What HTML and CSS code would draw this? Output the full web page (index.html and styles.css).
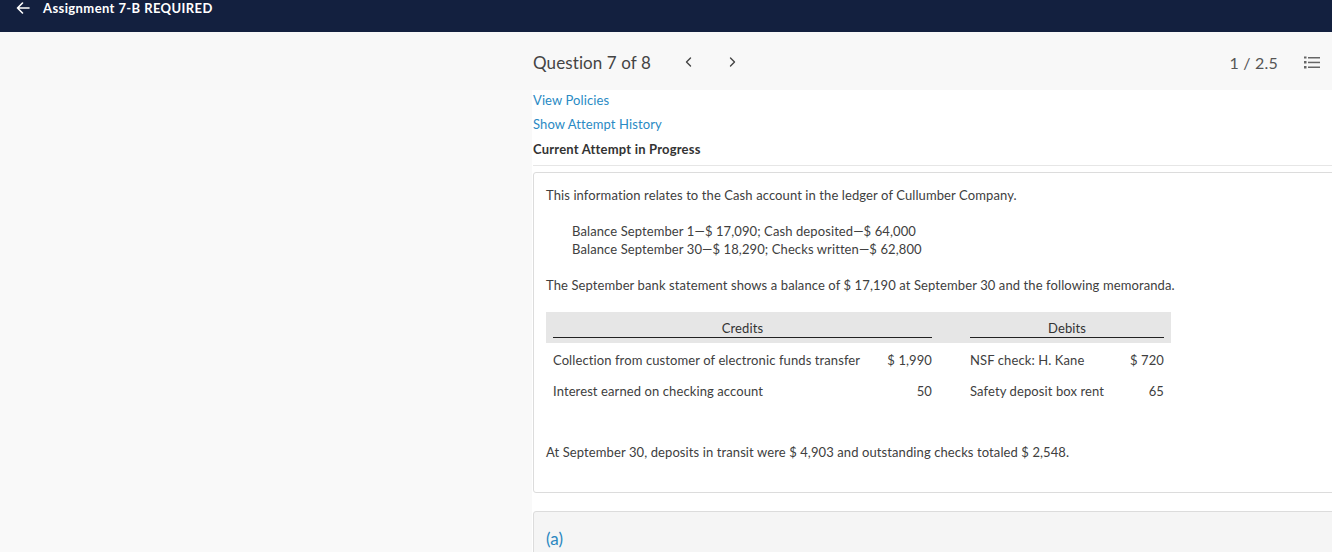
FILE: index.html
```html
<!DOCTYPE html>
<html lang="en">
<head>
<meta charset="utf-8">
<title>Assignment 7-B REQUIRED</title>
<link rel="stylesheet" href="styles.css">
</head>
<body>
<header class="topbar">
  <svg class="back" width="14" height="12" viewBox="0 0 14 12" aria-hidden="true">
    <path d="M13 6H1.5M6.5 1L1.5 6l5 5" fill="none" stroke="#fff" stroke-width="1.6" stroke-linecap="round" stroke-linejoin="round"/>
  </svg>
  <span class="title">Assignment 7-B REQUIRED</span>
</header>

<div class="qbar">
  <div class="qbar-spacer"></div>
  <div class="qbar-main">
    <div class="qnav">
      <span class="qtitle">Question 7 of 8</span>
      <svg class="chev" width="7" height="10" viewBox="0 0 7 10" aria-hidden="true"><path d="M5.5 1L1.5 5l4 4" fill="none" stroke="#444" stroke-width="1.4" stroke-linecap="round" stroke-linejoin="round"/></svg>
      <svg class="chev" width="7" height="10" viewBox="0 0 7 10" aria-hidden="true"><path d="M1.5 1l4 4-4 4" fill="none" stroke="#444" stroke-width="1.4" stroke-linecap="round" stroke-linejoin="round"/></svg>
    </div>
    <div class="score">
      <span class="points">1 / 2.5</span>
      <svg class="listicon" width="16" height="13" viewBox="0 0 16 13" aria-hidden="true">
        <rect x="0" y="0.5" width="2.5" height="2" fill="#666"/>
        <rect x="0" y="5" width="2.5" height="2.5" fill="#666"/>
        <rect x="0" y="10" width="2.5" height="2.5" fill="#666"/>
        <rect x="4" y="1" width="12" height="1.5" fill="#666"/>
        <rect x="4" y="5.7" width="12" height="1.5" fill="#666"/>
        <rect x="4" y="10.5" width="12" height="1.5" fill="#666"/>
      </svg>
    </div>
  </div>
</div>

<div class="page">
  <aside class="side"></aside>
  <main class="main">
    <div class="meta">
      <a class="link first" href="#">View Policies</a>
      <a class="link second" href="#">Show Attempt History</a>
      <div class="attempt">Current Attempt in Progress</div>
    </div>

    <section class="card">
      <p class="para">This information relates to the Cash account in the ledger of Cullumber Company.</p>
      <div class="indent">
        <div>Balance September 1—$ 17,090; Cash deposited—$ 64,000</div>
        <div>Balance September 30—$ 18,290; Checks written—$ 62,800</div>
      </div>
      <p class="para">The September bank statement shows a balance of $ 17,190 at September 30 and the following memoranda.</p>

      <div class="memo">
        <div class="memo-head">
          <div class="hcell credits"><span>Credits</span></div>
          <div class="hgap"></div>
          <div class="hcell debits"><span>Debits</span></div>
        </div>
        <div class="memo-row">
          <div class="lab">Collection from customer of electronic funds transfer</div>
          <div class="amt">$ 1,990</div>
          <div></div>
          <div class="lab">NSF check: H. Kane</div>
          <div class="amt">$ 720</div>
        </div>
        <div class="memo-row">
          <div class="lab">Interest earned on checking account</div>
          <div class="amt">50</div>
          <div></div>
          <div class="lab">Safety deposit box rent</div>
          <div class="amt">65</div>
        </div>
      </div>

      <p class="para last">At September 30, deposits in transit were $ 4,903 and outstanding checks totaled $ 2,548.</p>
    </section>

    <section class="card part">
      <div class="part-label">(a)</div>
    </section>
  </main>
</div>
</body>
</html>
```

FILE: styles.css
```css
html, body {
  margin: 0;
  padding: 0;
}
body {
  background: #f9f9f9;
  font-family: Lato, "Open Sans", "Liberation Sans", sans-serif;
  color: #333;
  overflow: hidden;
  width: 1332px;
  height: 552px;
}

.topbar {
  height: 32px;
  background: #13203f;
  display: flex;
  align-items: flex-start;
  padding-left: 16px;
  box-sizing: border-box;
}
.topbar .back {
  margin-top: 2px;
}
.topbar .title {
  color: #fff;
  font-weight: 700;
  font-size: 13px;
  line-height: 16px;
  margin-left: 13px;
  letter-spacing: 0.4px;
}

.qbar {
  height: 58px;
  display: flex;
  background: #f8f8f8;
}
.qbar-spacer {
  width: 532px;
  flex: none;
}
.qbar-main {
  flex: 1;
  display: flex;
  align-items: center;
  justify-content: space-between;
  padding-right: 12px;
  padding-top: 2px;
}
.qnav {
  display: flex;
  align-items: center;
}
.qtitle {
  font-size: 17px;
  color: #444;
  padding-left: 1px;
  letter-spacing: 0.1px;
}
.chev {
  margin-left: 37px;
}
.qtitle + .chev {
  margin-left: 34px;
}
.score {
  display: flex;
  align-items: center;
}
.points {
  font-size: 16px;
  color: #555;
  letter-spacing: 0.2px;
}
.listicon {
  margin-left: 26px;
}

.page {
  display: flex;
}
.side {
  width: 532px;
  flex: none;
}
.main {
  flex: none;
  width: 830px;
  background: #fff;
  padding-left: 1px;
  height: 470px;
}

.meta {
  border-bottom: 1px solid #e6e6e6;
  padding-bottom: 6px;
}
.link {
  display: block;
  color: #2a8ac4;
  text-decoration: none;
  font-size: 13px;
  line-height: 20px;
  letter-spacing: 0.1px;
}
.second {
  margin-top: 4px;
}
.attempt {
  font-size: 13px;
  font-weight: 700;
  line-height: 20px;
  margin-top: 5px;
  color: #333;
  letter-spacing: 0.2px;
}

.card {
  margin-top: 6px;
  border: 1px solid #dcdcdc;
  border-radius: 3px;
  padding: 13px 12px 31px;
  font-size: 13px;
  line-height: 18px;
  color: #404040;
  letter-spacing: 0.1px;
}
.para {
  margin: 0;
}
.indent {
  margin: 18px 0 18px 26px;
}
.memo {
  margin-top: 18px;
  width: 625px;
}
.memo-head {
  background: #e6e6e6;
  display: grid;
  grid-template-columns: 393px 24px 208px;
  padding: 7px 0 5px;
}
.hcell {
  padding: 0 7px;
}
.hcell span {
  display: block;
  text-align: center;
  line-height: 18px;
  border-bottom: 1px solid #222;
  padding-bottom: 0;
  color: #333;
}
.memo-row {
  display: grid;
  grid-template-columns: 324px 69px 24px 155px 53px;
  height: 31px;
  align-items: center;
  padding-top: 1px;
}
.memo-row .lab {
  padding-left: 7px;
}
.memo-row .amt {
  text-align: right;
  padding-right: 7px;
}
.memo-row + .memo-row {
  padding-top: 0;
}
.last {
  margin-top: 37px;
}

.card.part {
  margin-top: 18px;
  background: #f5f5f5;
  padding: 15px 12px 20px;
}
.part-label {
  color: #2a87c0;
  font-size: 17px;
  line-height: 24px;
}
```
